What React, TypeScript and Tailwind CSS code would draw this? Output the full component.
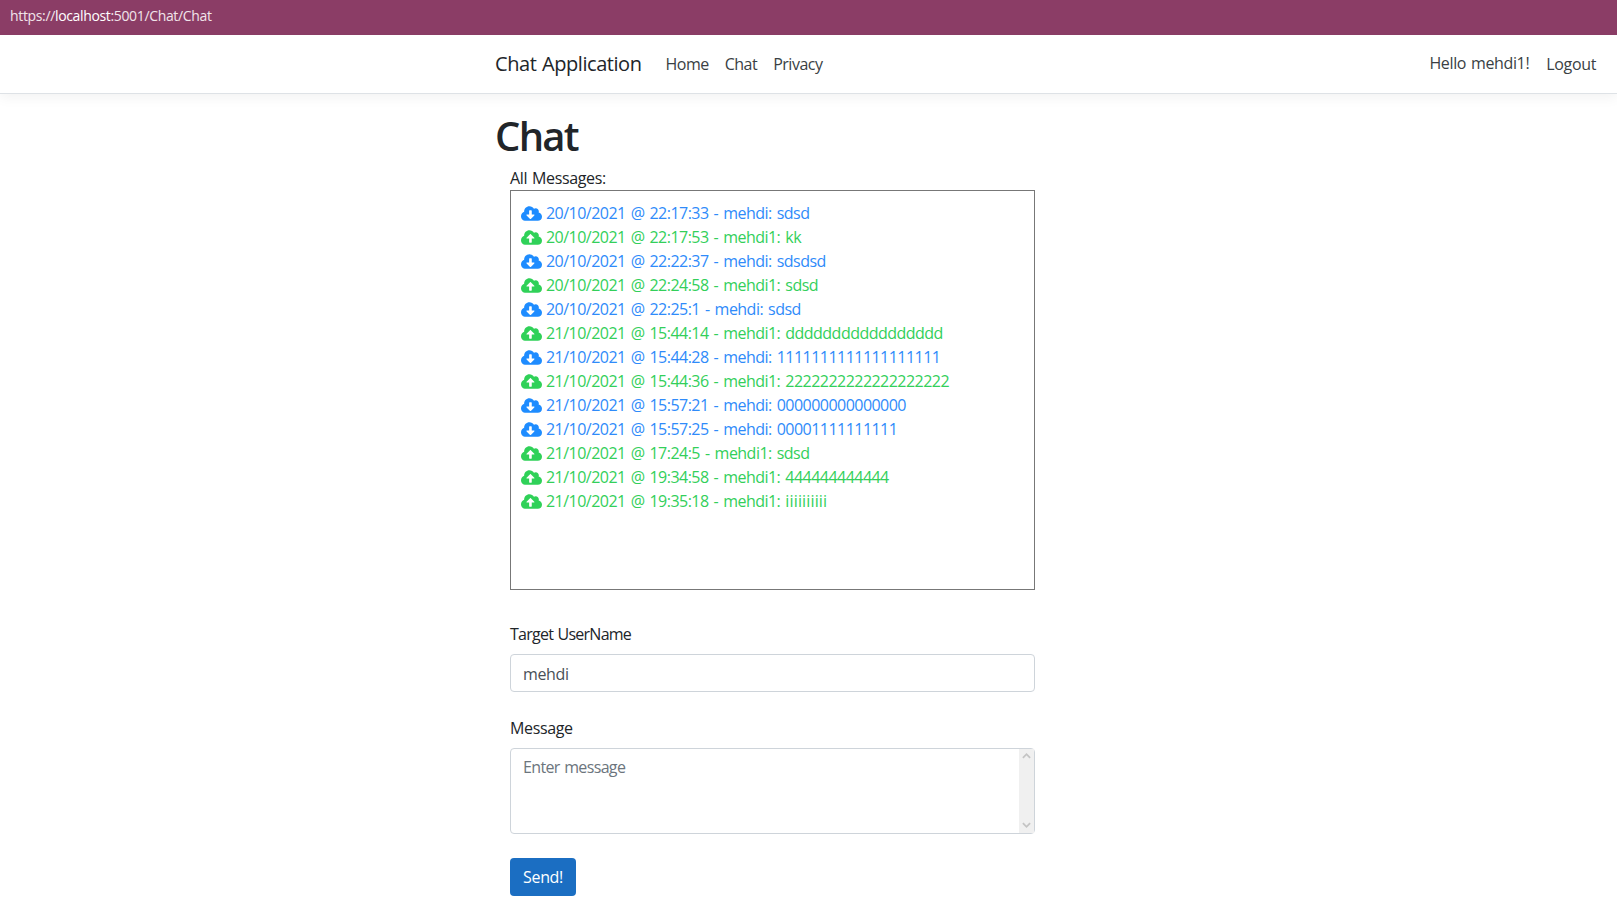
import { FaCloudDownloadAlt, FaCloudUploadAlt } from "react-icons/fa";

const messages = [
  { sent: false, text: "20/10/2021 @ 22:17:33 - mehdi: sdsd" },
  { sent: true, text: "20/10/2021 @ 22:17:53 - mehdi1: kk" },
  { sent: false, text: "20/10/2021 @ 22:22:37 - mehdi: sdsdsd" },
  { sent: true, text: "20/10/2021 @ 22:24:58 - mehdi1: sdsd" },
  { sent: false, text: "20/10/2021 @ 22:25:1 - mehdi: sdsd" },
  { sent: true, text: "21/10/2021 @ 15:44:14 - mehdi1: ddddddddddddddddd" },
  { sent: false, text: "21/10/2021 @ 15:44:28 - mehdi: 1111111111111111111" },
  { sent: true, text: "21/10/2021 @ 15:44:36 - mehdi1: 2222222222222222222" },
  { sent: false, text: "21/10/2021 @ 15:57:21 - mehdi: 000000000000000" },
  { sent: false, text: "21/10/2021 @ 15:57:25 - mehdi: 00001111111111" },
  { sent: true, text: "21/10/2021 @ 17:24:5 - mehdi1: sdsd" },
  { sent: true, text: "21/10/2021 @ 19:34:58 - mehdi1: 444444444444" },
  { sent: true, text: "21/10/2021 @ 19:35:18 - mehdi1: ", tail: "iiiiiiiiii" },
];

export default function App() {
  return (
    <div className="h-[916px] overflow-hidden bg-white font-['Open_Sans',sans-serif] text-[16px] text-[#212529] tracking-[-0.35px] [word-spacing:1px]">
      {/* address bar */}
      <div className="flex h-[35px] items-center whitespace-pre bg-[#8b3d66] pl-[10px] pb-[5px] text-[14px] text-[#f1e4ea]">
        https://<span className="text-white">localhost</span>:5001/Chat/Chat
      </div>

      {/* navbar */}
      <nav className="flex h-[59px] items-center border-b border-[#dee2e6] pl-[495px] pr-[21px] shadow-[0_4px_12px_rgba(0,0,0,0.05)]">
        <span className="mr-[24px] text-[20px] text-[#212529] tracking-[-0.45px]">Chat Application</span>
        <div className="flex gap-[16px] text-[#3a3f44] tracking-[-0.5px]">
          <span>Home</span>
          <span>Chat</span>
          <span>Privacy</span>
        </div>
        <div className="ml-auto flex items-center gap-[17px] text-[#3a3f44]">
          <span className="mb-[2px]">Hello mehdi1!</span>
          <span>Logout</span>
        </div>
      </nav>

      <main className="pl-[495px]">
        <h1 className="mt-[18px] text-[40px] leading-[48px] font-semibold text-[#212529] tracking-[-1.7px]">Chat</h1>

        <div className="ml-[15px] w-[525px]">
          <div className="mt-[6px] leading-[24px]">All Messages:</div>
          <div className="h-[400px] border border-[#777777] pt-[10px] pl-[10px]">
            {messages.map((m, i) => (
              <div
                key={i}
                className={`flex h-[24px] items-center gap-[4px] whitespace-pre tracking-[-0.53px] [word-spacing:1.4px] ${m.sent ? "text-[#33cf5a]" : "text-[#2f8bfa]"}`}
              >
                {m.sent ? (
                  <FaCloudUploadAlt className="h-[17px] w-[21px] shrink-0 text-[#2fd158]" />
                ) : (
                  <FaCloudDownloadAlt className="h-[17px] w-[21px] shrink-0 text-[#1e8cff]" />
                )}
                <span>
                  {m.text}
                  {m.tail && <span className="tracking-[0.15px]">{m.tail}</span>}
                </span>
              </div>
            ))}
          </div>

          <label className="mt-[32px] mb-[8px] block leading-[24px] tracking-[-0.75px]">Target UserName</label>
          <div className="flex h-[38px] items-center rounded-[4px] border border-[#ced4da] px-[12px] pt-[1px] text-[#495057]">
            mehdi
          </div>

          <label className="mt-[24px] mb-[8px] block leading-[24px]">Message</label>
          <div className="flex h-[86px] rounded-[4px] border border-[#ced4da]">
            <div className="flex-1 px-[12px] pt-[6px] text-[#6c757d] tracking-[-0.65px]">Enter message</div>
            <div className="flex w-[15px] flex-col items-center justify-between bg-[#f0f0f0] pt-[3px] pb-[4px] text-[#c4c4c4]">
              <svg viewBox="0 0 10 8" className="h-[8px] w-[9px]" fill="none" stroke="currentColor" strokeWidth="2">
                <path d="M1 6l4-4 4 4" />
              </svg>
              <svg viewBox="0 0 10 8" className="h-[8px] w-[9px]" fill="none" stroke="currentColor" strokeWidth="2">
                <path d="M1 2l4 4 4-4" />
              </svg>
            </div>
          </div>

          <button className="mt-[24px] h-[38px] w-[66px] rounded-[4px] bg-[#1b6ec2] text-white">Send!</button>
        </div>
      </main>
    </div>
  );
}
